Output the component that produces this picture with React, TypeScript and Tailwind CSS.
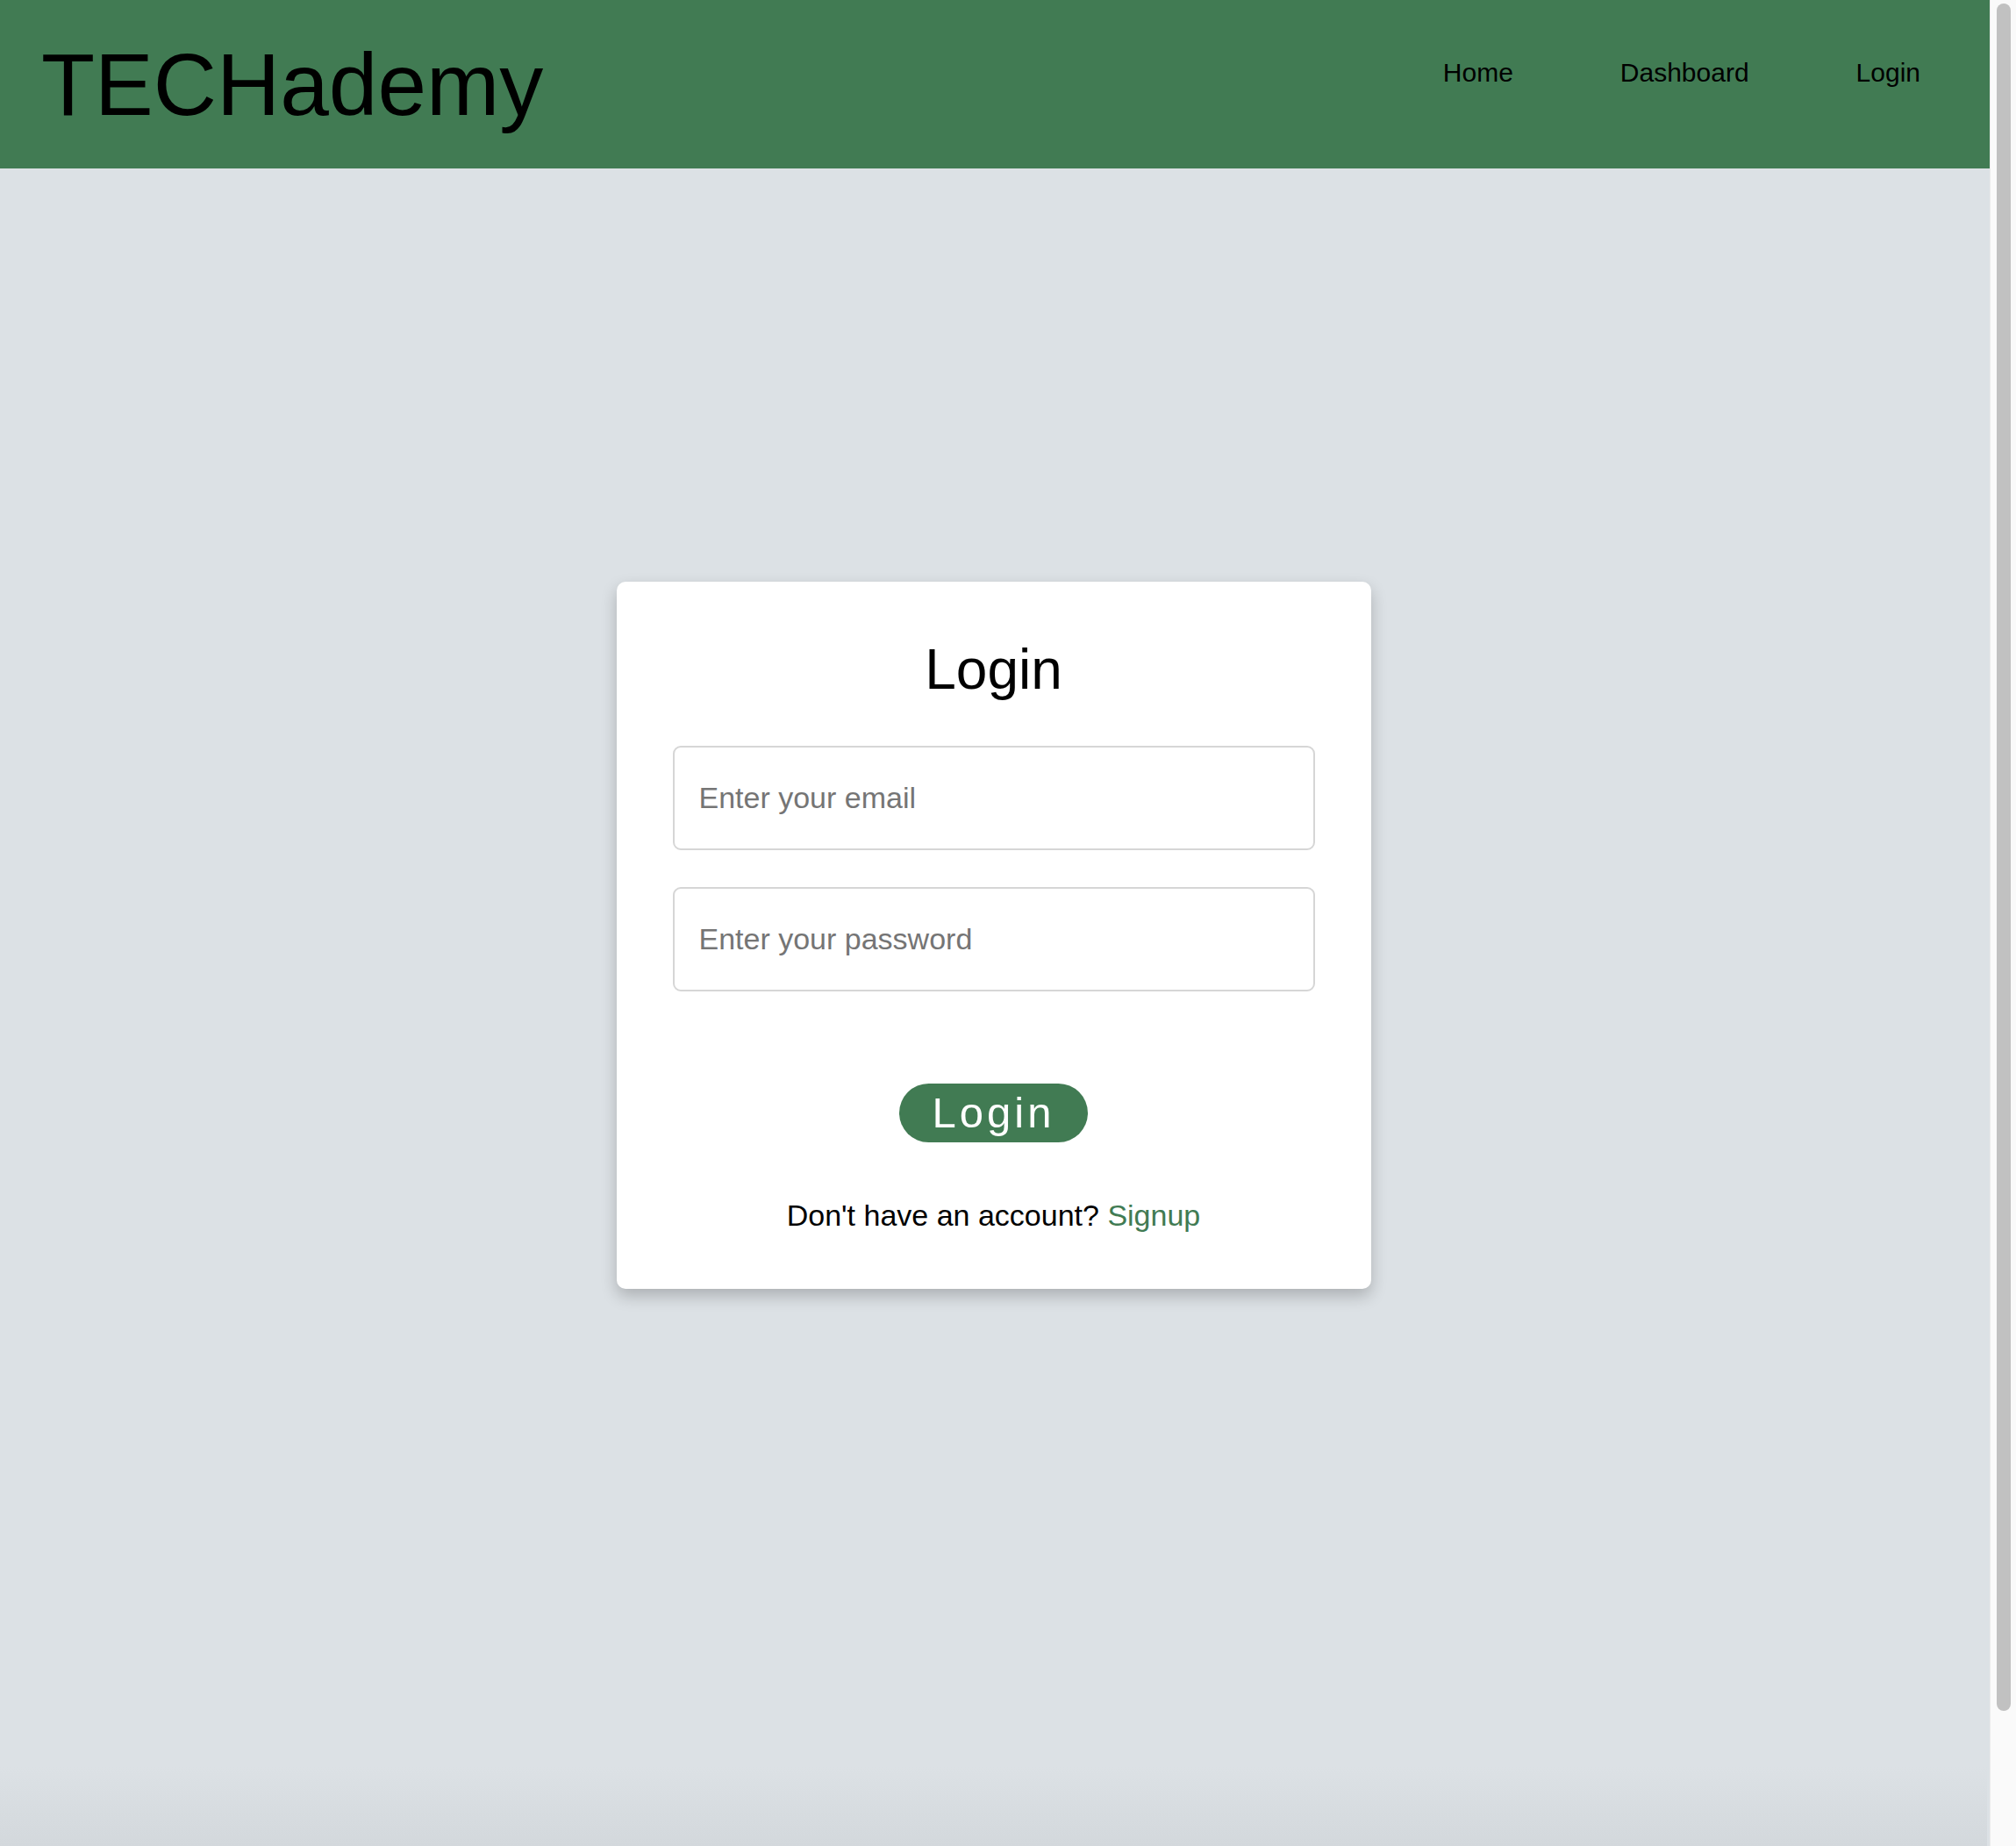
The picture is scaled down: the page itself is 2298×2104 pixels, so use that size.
import React from "react";

/**
 * Pantalla de inicio de sesión de TECHademy.
 * Barra verde arriba, tarjeta blanca centrada con el formulario.
 */

const navLinks = ["Home", "Dashboard", "Login"];

function Header() {
  return (
    <header className="flex h-[192px] shrink-0 justify-between bg-[#417b53] pl-[47px] pr-[79px]">
      {/* Logo */}
      <div className="flex items-center text-[100px] leading-none text-black">TECHademy</div>

      {/* Navegación */}
      <nav className="flex gap-[122px] pt-[68px] text-[30px] leading-none text-black">
        {navLinks.map((link) => (
          <a key={link} href="#" className="h-fit">
            {link}
          </a>
        ))}
      </nav>
    </header>
  );
}

function LoginCard() {
  return (
    <div className="w-[860px] rounded-[10px] bg-white p-[64px] shadow-[0_8px_18px_rgba(0,0,0,0.22)]">
      <h1 className="text-center text-[64px] font-normal leading-[1.15] text-black">Login</h1>

      <form className="mt-[49px] flex flex-col gap-[42px]" onSubmit={(e) => e.preventDefault()}>
        <input
          type="email"
          placeholder="Enter your email"
          className="h-[119px] w-full rounded-[9px] border-2 border-[#d6d6d6] bg-white px-[28px] text-[34px] text-black outline-none placeholder:text-[#757575]"
        />
        <input
          type="password"
          placeholder="Enter your password"
          className="h-[119px] w-full rounded-[9px] border-2 border-[#d6d6d6] bg-white px-[28px] text-[34px] text-black outline-none placeholder:text-[#757575]"
        />
      </form>

      <div className="mt-[105px] flex justify-center">
        <button className="flex h-[67px] items-center rounded-full bg-[#417b53] px-[38px] text-[49px] leading-[1.15] tracking-[4px] text-white">
          Login
        </button>
      </div>

      <p className="mt-[64px] text-center text-[34px] leading-[1.15] text-black">
        Don't have an account? <a href="#" className="text-[#417b53]">Signup</a>
      </p>
    </div>
  );
}

export default function App() {
  return (
    <div className="flex h-[2104px] w-full overflow-hidden bg-[#dce1e5] font-['Liberation_Sans',Arial,sans-serif]">
      <div className="flex min-w-0 flex-1 flex-col">
        <Header />
        <main className="flex flex-1 flex-col items-center pr-[3px] pt-[471px]">
          <LoginCard />
          <div className="mt-auto h-[90px] w-full bg-linear-to-b from-[#dce1e5] to-[#d3d8dc]" />
        </main>
      </div>

      {/* Barra de desplazamiento */}
      <div className="w-[30px] shrink-0 border-l border-[#ebebeb] bg-[#fafafa] pl-[7px] pt-[4px]">
        <div className="h-[1946px] w-[16px] rounded-full bg-[#c1c1c1]" />
      </div>
    </div>
  );
}
